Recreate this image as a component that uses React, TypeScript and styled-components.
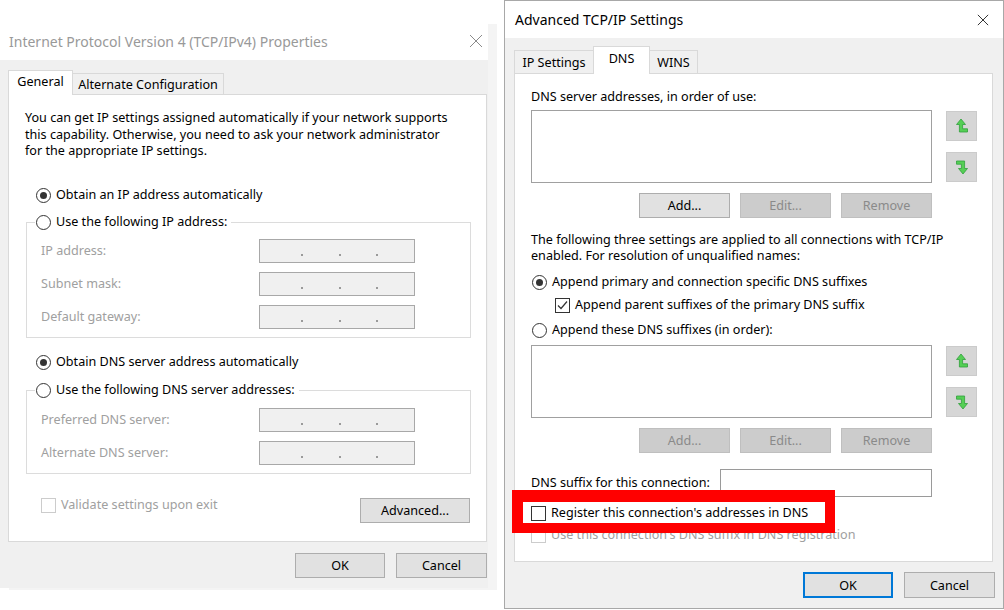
import React from 'react'
import styled, { createGlobalStyle } from 'styled-components'

const GlobalStyle = createGlobalStyle`
    * {
        box-sizing: border-box;
    }

    html, body {
        margin: 0;
        padding: 0;
        background: #fff;
    }

    body {
        font-family: "Noto Sans", "Segoe UI", sans-serif;
        font-size: 12.6px;
        color: #000;
    }
`

const Page = styled.div`
    width: 1004px;
    height: 610px;

    display: flex;
    align-items: flex-start;

    overflow: hidden;
    background: #fff;
`

const LeftWindow = styled.div`
    width: 488px;
    height: 566px;
    margin-top: 22px;
    margin-right: 16px;

    display: flex;
    flex-direction: column;

    background: #f0f0f0;
    box-shadow: 9px 2px 0 0 #f4f4f4;
`

const RightWindow = styled.div`
    width: 500px;
    height: 609px;

    display: flex;
    flex-direction: column;

    background: #f0f0f0;
    border: 1px solid #a8a8a8;
`

const TitleBar = styled.div<{ $h: number; $padL: number; $padR: number; $inactive?: boolean }>`
    height: ${p => p.$h}px;
    flex-shrink: 0;
    padding: 0 ${p => p.$padR}px 0 ${p => p.$padL}px;

    display: flex;
    align-items: center;
    justify-content: space-between;

    background: #fff;
    color: ${p => (p.$inactive ? '#999' : '#000')};
    font-size: 14px;
    white-space: nowrap;
`

const Body = styled.div<{ $pad: string }>`
    flex: 1;
    padding: ${p => p.$pad};

    display: flex;
    flex-direction: column;
`

const TabStrip = styled.div`
    display: flex;
    align-items: flex-end;

    margin-bottom: -1px;
    position: relative;
    z-index: 1;
`

const Tab = styled.div<{ $active?: boolean; $w: number; $h: number }>`
    width: ${p => p.$w}px;
    height: ${p => p.$h}px;
    margin-left: -1px;

    display: flex;
    align-items: center;
    justify-content: center;
    padding-bottom: ${p => (p.$active ? 4 : 0)}px;

    background: ${p => (p.$active ? '#fff' : '#f0f0f0')};
    border: 1px solid #d9d9d9;
    border-bottom: ${p => (p.$active ? 'none' : '1px solid #d9d9d9')};

    position: relative;
    z-index: ${p => (p.$active ? 2 : 1)};
    white-space: nowrap;

    &:first-child {
        margin-left: 0;
    }
`

const Panel = styled.div<{ $pad: string; $mr?: number }>`
    padding: ${p => p.$pad};
    margin-right: ${p => p.$mr ?? 0}px;

    background: #fff;
    border: 1px solid #d9d9d9;
`

const Para = styled.div<{ $lh: number; $mt?: number }>`
    margin-top: ${p => p.$mt ?? 0}px;
    line-height: ${p => p.$lh}px;
    white-space: nowrap;
`

const Label = styled.div<{ $disabled?: boolean }>`
    height: 16px;
    line-height: 16px;
    white-space: nowrap;
    color: ${p => (p.$disabled ? '#a0a0a0' : '#000')};
`

const OptionRow = styled.div<{ $mt?: number; $ml?: number; $disabled?: boolean }>`
    height: 16px;
    margin-top: ${p => p.$mt ?? 0}px;
    margin-left: ${p => p.$ml ?? 0}px;

    display: flex;
    align-items: center;
    gap: 5px;

    line-height: 16px;
    white-space: nowrap;
    color: ${p => (p.$disabled ? '#a0a0a0' : '#000')};
    position: relative;
`

const RadioDot = styled.span<{ $checked?: boolean }>`
    width: 15px;
    height: 15px;
    flex-shrink: 0;

    border: 1px solid #333;
    border-radius: 50%;
    background: #fff;

    display: flex;
    align-items: center;
    justify-content: center;

    &::after {
        content: '';
        width: 7px;
        height: 7px;
        border-radius: 50%;
        background: ${p => (p.$checked ? '#333' : 'transparent')};
    }
`

const CheckBox = styled.span<{ $disabled?: boolean }>`
    width: 15px;
    height: 15px;
    flex-shrink: 0;

    border: 1px solid ${p => (p.$disabled ? '#cccccc' : '#333')};
    background: #fff;

    display: flex;
    align-items: center;
    justify-content: center;
`

const GroupBox = styled.fieldset<{ $pt: number; $mt: number }>`
    margin: ${p => p.$mt}px -1px 0 1px;
    padding: ${p => p.$pt}px 0 8px 14px;
    min-width: 0;

    border: 1px solid #dcdcdc;
`

const GroupLegend = styled.legend`
    margin-left: -6px;
    padding: 0 4px 0 1px;
    height: 16px;

    display: flex;
    align-items: center;
    gap: 5px;

    line-height: 16px;
    white-space: nowrap;
`

const FieldGrid = styled.div`
    display: grid;
    grid-template-columns: 218px 156px;
    row-gap: 9px;
    align-items: center;
`

const IpBox = styled.div`
    width: 156px;
    height: 24px;

    border: 1px solid #a8a8a8;
    background: #f0f0f0;

    display: flex;
    align-items: flex-start;
    padding: 14px 0 0 41px;
    gap: 35.5px;
`

const IpDot = styled.span`
    width: 2px;
    height: 2px;
    background: #9a9a9a;
`

const BottomRow = styled.div`
    margin-top: 23px;
    padding-left: 16px;

    display: flex;
    align-items: flex-start;
    justify-content: space-between;
`

const Button = styled.button<{ $w: number; $h: number; $default?: boolean; $mt?: number }>`
    width: ${p => p.$w}px;
    height: ${p => p.$h}px;
    margin-top: ${p => p.$mt ?? 0}px;
    padding: 0;

    font-family: inherit;
    font-size: 12.6px;
    color: #000;

    background: #e1e1e1;
    border: 1px solid ${p => (p.$default ? '#0078d7' : '#adadad')};
    box-shadow: ${p => (p.$default ? 'inset 0 0 0 1px #0078d7' : 'none')};

    &:disabled {
        background: #cccccc;
        border-color: #bfbfbf;
        color: #8a8a8a;
    }
`

const Footer = styled.div<{ $mt: number; $pr: number }>`
    margin-top: ${p => p.$mt}px;
    padding-right: ${p => p.$pr}px;

    display: flex;
    justify-content: flex-end;
    gap: 11px;
`

const ListRow = styled.div<{ $mt: number }>`
    margin-top: ${p => p.$mt}px;
    display: flex;
`

const ListBox = styled.div`
    width: 401px;
    height: 73px;

    border: 1px solid #a0a0a0;
    background: #fff;
`

const ArrowColumn = styled.div`
    margin-left: 14px;
    padding-top: 1px;

    display: flex;
    flex-direction: column;
    gap: 11px;
`

const ArrowButton = styled.div`
    width: 31px;
    height: 30px;

    display: flex;
    align-items: center;
    justify-content: center;

    background: #d6d6d6;
    border: 1px solid #cbcbcb;
`

const ButtonRow = styled.div`
    width: 401px;
    margin-top: 10px;

    display: flex;
    justify-content: flex-end;
    gap: 10px;
`

const SuffixRow = styled.div`
    width: 401px;
    height: 28px;
    margin-top: 16px;

    display: flex;
    align-items: center;
    justify-content: space-between;
`

const TextInput = styled.div`
    width: 212px;
    height: 28px;

    border: 1px solid #9a9a9a;
    background: #fff;
`

const Highlight = styled.div`
    position: absolute;
    left: -19px;
    top: -15px;
    width: 323px;
    height: 43px;

    border-style: solid;
    border-color: #ff0000;
    border-width: 12px 10px 10px 11px;

    z-index: 5;
    pointer-events: none;
`

const CloseIcon = ({ color, size }: { color: string; size: number }) => (
    <svg width={size} height={size} viewBox="0 0 14 14">
        <path d="M1 1 L13 13 M13 1 L1 13" stroke={color} strokeWidth="1" fill="none" />
    </svg>
)

const Tick = () => (
    <svg width="11" height="11" viewBox="0 0 11 11">
        <path d="M1 5.5 L4 8.5 L10 1.5" stroke="#333" strokeWidth="1.2" fill="none" />
    </svg>
)

const MoveArrow = ({ down }: { down?: boolean }) => (
    <svg width="14" height="16" viewBox="0 0 14 16">
        <path
            d="M6 1 L10.5 6.5 H7.6 V10.8 H12.5 V14 H4.4 V6.5 H1.5 Z"
            fill="#55cf55"
            stroke="#31a03c"
            strokeWidth="0.8"
            transform={down ? 'rotate(180 7 8)' : undefined}
        />
    </svg>
)

const Radio = ({ checked, children, mt, ml }: { checked?: boolean; children: React.ReactNode; mt?: number; ml?: number }) => (
    <OptionRow $mt={mt} $ml={ml}>
        <RadioDot $checked={checked} />
        <span>{children}</span>
    </OptionRow>
)

const Check = ({ checked, disabled, children, mt, ml, highlight }: {
    checked?: boolean; disabled?: boolean; children: React.ReactNode; mt?: number; ml?: number; highlight?: boolean
}) => (
    <OptionRow $mt={mt} $ml={ml} $disabled={disabled}>
        <CheckBox $disabled={disabled}>{checked && <Tick />}</CheckBox>
        <span>{children}</span>
        {highlight && <Highlight />}
    </OptionRow>
)

const IpField = () => (
    <IpBox>
        <IpDot />
        <IpDot />
        <IpDot />
    </IpBox>
)

const MoveButtons = () => (
    <ArrowColumn>
        <ArrowButton><MoveArrow /></ArrowButton>
        <ArrowButton><MoveArrow down /></ArrowButton>
    </ArrowColumn>
)

const Ipv4Properties = () => (
    <LeftWindow>
        <TitleBar $h={38} $padL={9} $padR={5} $inactive>
            <span>Internet Protocol Version 4 (TCP/IPv4) Properties</span>
            <CloseIcon color="#8a8a8a" size={14} />
        </TitleBar>

        <Body $pad="10px 1px 0 8px">
            <TabStrip>
                <Tab $active $w={65} $h={25}>General</Tab>
                <Tab $w={152} $h={22}>Alternate Configuration</Tab>
            </TabStrip>

            <Panel $pad="15px 16px 18px 16px">
                <Para $lh={16.5}>
                    You can get IP settings assigned automatically if your network supports<br />
                    this capability. Otherwise, you need to ask your network administrator<br />
                    for the appropriate IP settings.
                </Para>

                <Radio checked mt={27.5} ml={11}>Obtain an IP address automatically</Radio>

                <GroupBox $pt={9} $mt={11}>
                    <GroupLegend>
                        <RadioDot />
                        <span>Use the following IP address:</span>
                    </GroupLegend>
                    <FieldGrid>
                        <Label $disabled>IP address:</Label>
                        <IpField />
                        <Label $disabled>Subnet mask:</Label>
                        <IpField />
                        <Label $disabled>Default gateway:</Label>
                        <IpField />
                    </FieldGrid>
                </GroupBox>

                <Radio checked mt={16} ml={11}>Obtain DNS server address automatically</Radio>

                <GroupBox $pt={10} $mt={12}>
                    <GroupLegend>
                        <RadioDot />
                        <span>Use the following DNS server addresses:</span>
                    </GroupLegend>
                    <FieldGrid>
                        <Label $disabled>Preferred DNS server:</Label>
                        <IpField />
                        <Label $disabled>Alternate DNS server:</Label>
                        <IpField />
                    </FieldGrid>
                </GroupBox>

                <BottomRow>
                    <Check disabled>Validate settings upon exit</Check>
                    <Button $w={110} $h={25} $mt={1}>Advanced...</Button>
                </BottomRow>
            </Panel>

            <Footer $mt={11} $pr={0}>
                <Button $w={90} $h={25}>OK</Button>
                <Button $w={91} $h={25}>Cancel</Button>
            </Footer>
        </Body>
    </LeftWindow>
)

const AdvancedSettings = () => (
    <RightWindow>
        <TitleBar $h={37} $padL={10} $padR={14}>
            <span>Advanced TCP/IP Settings</span>
            <CloseIcon color="#111" size={12} />
        </TitleBar>

        <Body $pad="8px 0 0 9px">
            <TabStrip>
                <Tab $w={80} $h={24}>IP Settings</Tab>
                <Tab $active $w={57} $h={28}>DNS</Tab>
                <Tab $w={49} $h={24}>WINS</Tab>
            </TabStrip>

            <Panel $pad="15px 0 18px 16px" $mr={10}>
                <Label>DNS server addresses, in order of use:</Label>

                <ListRow $mt={5}>
                    <ListBox />
                    <MoveButtons />
                </ListRow>

                <ButtonRow>
                    <Button $w={91} $h={25}>Add...</Button>
                    <Button $w={91} $h={25} disabled>Edit...</Button>
                    <Button $w={91} $h={25} disabled>Remove</Button>
                </ButtonRow>

                <Para $lh={16} $mt={14}>
                    The following three settings are applied to all connections with TCP/IP<br />
                    enabled. For resolution of unqualified names:
                </Para>

                <Radio checked mt={10} ml={1}>Append primary and connection specific DNS suffixes</Radio>
                <Check checked mt={7} ml={24}>Append parent suffixes of the primary DNS suffix</Check>
                <Radio mt={9} ml={1}>Append these DNS suffixes (in order):</Radio>

                <ListRow $mt={7}>
                    <ListBox />
                    <MoveButtons />
                </ListRow>

                <ButtonRow>
                    <Button $w={91} $h={25} disabled>Add...</Button>
                    <Button $w={91} $h={25} disabled>Edit...</Button>
                    <Button $w={91} $h={25} disabled>Remove</Button>
                </ButtonRow>

                <SuffixRow>
                    <Label>DNS suffix for this connection:</Label>
                    <TextInput />
                </SuffixRow>

                <Check mt={8} highlight>Register this connection's addresses in DNS</Check>
                <Check mt={6} disabled>Use this connection's DNS suffix in DNS registration</Check>
            </Panel>

            <Footer $mt={10} $pr={8}>
                <Button $w={90} $h={26} $default>OK</Button>
                <Button $w={91} $h={26}>Cancel</Button>
            </Footer>
        </Body>
    </RightWindow>
)

export default function App() {
    return (
        <>
            <GlobalStyle />
            <Page>
                <Ipv4Properties />
                <AdvancedSettings />
            </Page>
        </>
    )
}
